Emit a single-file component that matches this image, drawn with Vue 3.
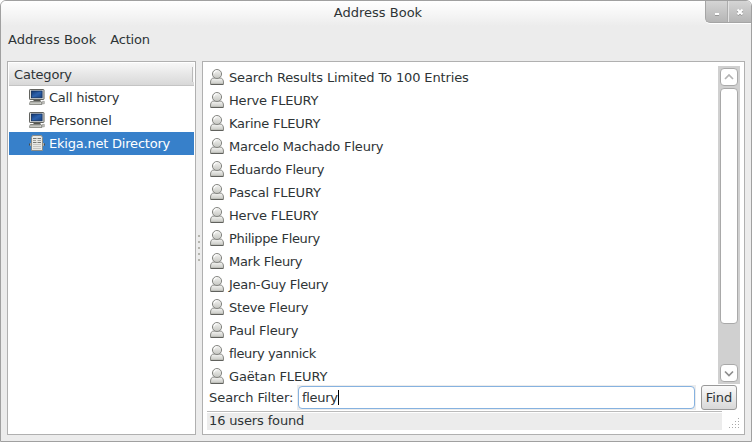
<script setup>
import { ref } from 'vue'

// tracking: letter spacing in px for each label
const categories = [
  { name: 'Call history', icon: 'computer', tracking: -0.25 },
  { name: 'Personnel', icon: 'computer', tracking: -0.08 },
  { name: 'Ekiga.net Directory', icon: 'server', tracking: -0.21 },
]
const selected = ref(2)
const contacts = [
  { name: 'Search Results Limited To 100 Entries', tracking: -0.13 },
  { name: 'Herve FLEURY', tracking: -0.18 },
  { name: 'Karine FLEURY', tracking: -0.22 },
  { name: 'Marcelo Machado Fleury', tracking: -0.18 },
  { name: 'Eduardo Fleury', tracking: -0.24 },
  { name: 'Pascal FLEURY', tracking: -0.12 },
  { name: 'Herve FLEURY', tracking: -0.18 },
  { name: 'Philippe Fleury', tracking: -0.34 },
  { name: 'Mark Fleury', tracking: -0.3 },
  { name: 'Jean-Guy Fleury', tracking: -0.3 },
  { name: 'Steve Fleury', tracking: -0.2 },
  { name: 'Paul Fleury', tracking: -0.22 },
  { name: 'fleury yannick', tracking: -0.37 },
  { name: 'Gaëtan FLEURY', tracking: -0.14 },
]
const filter = ref('fleury')
const gripDots = [
  [9, 0], [6, 3], [9, 3], [3, 6], [6, 6], [9, 6], [0, 9], [3, 9], [6, 9], [9, 9],
]
</script>

<template>
  <div class="window">
    <svg class="defs" width="0" height="0">
      <defs>
        <linearGradient id="body" x1="0" y1="0" x2="0" y2="1">
          <stop offset="0" stop-color="#f6f6f4" />
          <stop offset="1" stop-color="#c4c5c0" />
        </linearGradient>
        <linearGradient id="screen" x1="0" y1="0" x2="1" y2="1">
          <stop offset="0" stop-color="#12366f" />
          <stop offset="0.5" stop-color="#2d62ad" />
          <stop offset="1" stop-color="#17407e" />
        </linearGradient>
        <symbol id="person" viewBox="0 0 16 16">
          <path d="M1.5 14c0-3 .8-5 3.500-5h6c2.700 0 3.500 2 3.500 5q0 1.500-1 1.500h-11q-1 0-1-1.500z" fill="url(#body)" stroke="#858682" />
          <path d="M1.500 15.400h13" stroke="#5c5d59" />
          <ellipse cx="8" cy="5" rx="4.600" ry="4.500" fill="url(#body)" stroke="#858682" />
          <path d="M5 4.500a3 3 0 0 1 3.200-2.800" fill="none" stroke="#fff" />
        </symbol>
        <symbol id="computer" viewBox="0 0 16 16">
          <rect x="0.500" y="0.500" width="14.500" height="10" rx="0.600" fill="#deded9" stroke="#62635f" />
          <rect x="2.400" y="2" width="10.700" height="6.800" fill="url(#screen)" stroke="#102d5c" stroke-width="0.800" />
          <path d="M4.500 11h7v1.300h-7z" fill="#555651" />
          <path d="M1.300 12.500h10.800l.9 2.900H0.500z" fill="#deded9" stroke="#797a75" stroke-width="0.900" />
          <path d="M2 13.800h9.300" stroke="#a4a5a0" />
          <path d="M13.500 12.300h1.800v2.500h-1.800z" fill="#c5c6c1" stroke="#8b8c87" stroke-width="0.600" />
        </symbol>
        <symbol id="server" viewBox="0 0 16 16">
          <path d="M0 9.500h16" stroke="#4c4d4a" stroke-width="2" />
          <path d="M1.500 8v3M14.500 8v3" stroke="#a9aaa5" />
          <path d="M3.500 0.500h9l1 2v13h-11v-13z" fill="#e9e9e5" stroke="#8a8b86" />
          <path d="M4 3.500h3.500M8.500 3.500H12M4 7.500h3.500M8.500 7.500H12" stroke="#777873" />
          <path d="M4 5.500h3M8.500 5.500H12" stroke="#a0a19c" />
          <path d="M4.500 9.500h7M4.500 11.500h7M4.500 13.500h7" stroke="#a0a19c" stroke-dasharray="1 1" />
        </symbol>
      </defs>
    </svg>

    <header class="titlebar">
      <span class="title">Address Book</span>
      <div class="controls">
        <button class="control" aria-label="Minimize">
          <svg width="12" height="12"><path d="M4 8h4" stroke="#fff" stroke-width="2" /><path d="M4 9.500h4" stroke="#989898" /></svg>
        </button>
        <button class="control" aria-label="Close">
          <svg width="12" height="12"><path d="M3.500 4l5 5M8.500 4l-5 5" stroke="#8e8e8e" stroke-width="2.500" /><path d="M3.500 3.500l5 5M8.500 3.500l-5 5" stroke="#fff" stroke-width="2.200" /></svg>
        </button>
      </div>
    </header>

    <nav class="menubar">
      <span>Address Book</span>
      <span class="tight">Action</span>
    </nav>

    <main class="panes">
      <section class="panel sidebar">
        <div class="column-head tight">Category</div>
        <div
          v-for="(c, i) in categories"
          :key="c.name"
          class="category"
          :class="{ selected: i === selected }"
          @click="selected = i"
        >
          <svg width="16" height="16"><use :href="'#' + c.icon" /></svg>
          <span :style="{ letterSpacing: c.tracking + 'px' }">{{ c.name }}</span>
        </div>
      </section>

      <div class="handle"><i v-for="n in 5" :key="n" /></div>

      <section class="panel content">
        <div class="listing">
          <div class="contacts">
            <div v-for="(c, i) in contacts" :key="i" class="contact">
              <svg width="16" height="16"><use href="#person" /></svg>
              <span :style="{ letterSpacing: c.tracking + 'px' }">{{ c.name }}</span>
            </div>
          </div>
          <div class="scrollbar">
            <div class="step">
              <svg width="16" height="16"><path d="M4 10l4-4 4 4" fill="none" stroke="#b4b4b4" stroke-width="1.700" /></svg>
            </div>
            <div class="thumb" />
            <div class="spacer" />
            <div class="step">
              <svg width="16" height="16"><path d="M4 6.500l4 4 4-4" fill="none" stroke="#8e8e8e" stroke-width="1.700" /></svg>
            </div>
          </div>
        </div>

        <div class="search">
          <span class="label">Search Filter:</span>
          <div class="entry-wrap">
            <div class="entry">{{ filter }}<i class="caret" /></div>
          </div>
          <button class="find">Find</button>
        </div>

        <div class="status">
          <div class="status-text">16 users found</div>
          <svg class="grip" width="11" height="11">
            <rect v-for="(d, i) in gripDots" :key="i" :x="d[0]" :y="d[1]" width="1" height="1" fill="#a8a8a8" />
          </svg>
        </div>
      </section>
    </main>
  </div>
</template>

<style>
body {
  background: #fff;
}
</style>

<style scoped>
* {
  box-sizing: border-box;
}
.window {
  width: 752px;
  height: 442px;
  display: flex;
  flex-direction: column;
  overflow: hidden;
  border: 1px solid #a0a0a0;
  border-radius: 6px 6px 0 0;
  background: #ececec;
  color: #2e3436;
  font: 13px/23px "DejaVu Sans", sans-serif;
}
.defs {
  position: absolute;
}
svg {
  display: block;
  flex: none;
}
button {
  font: inherit;
  color: inherit;
  padding: 0;
  margin: 0;
}
.tight {
  letter-spacing: -0.2px;
}
.titlebar {
  flex: none;
  height: 25px;
  display: grid;
  grid-template-columns: 49px 1fr 49px;
  background: linear-gradient(#fff, #f4f4f4 60%, #ececec);
}
.title {
  grid-column: 2;
  padding-left: 4px;
  text-align: center;
}
.controls {
  display: flex;
  justify-self: end;
  width: 46px;
  height: 22px;
  border: solid #a5a5a5;
  border-width: 0 0 1px 1px;
  border-radius: 0 0 0 5px;
  overflow: hidden;
  background: linear-gradient(#d5d5d5, #b5b5b5);
  box-shadow: 0 1px 0 #fff;
}
.control {
  flex: 1;
  display: flex;
  align-items: center;
  justify-content: center;
  border: 0;
  background: none;
}
.control + .control {
  border-left: 1px solid #e2e2e2;
  box-shadow: -1px 0 0 #acacac;
}
.menubar {
  flex: none;
  height: 35px;
  display: flex;
  gap: 14px;
  padding: 2px 7px 0;
}
.panes {
  flex: none;
  height: 374px;
  display: flex;
  padding: 0 6px;
}
.panel {
  flex: none;
  border: 1px solid #b0b0b0;
  background: #fff;
}
.sidebar {
  width: 189px;
  padding: 1px;
}
.column-head {
  display: flex;
  justify-content: space-between;
  height: 23px;
  padding-left: 5px;
  border-bottom: 1px solid #c4c4c4;
  background: linear-gradient(#f7f7f7, #d8d8d8);
}
.column-head::after {
  content: "";
  width: 1px;
  height: 15px;
  margin-top: 4px;
  border-left: 1px solid #bababa;
  background: #f8f8f8;
}
.category {
  display: flex;
  align-items: center;
  gap: 4px;
  height: 23px;
  padding-left: 20px;
}
.category svg,
.contact svg {
  margin-bottom: 1px;
}
.selected {
  background: #3780ca;
  color: #fff;
}
.handle {
  width: 6px;
  display: flex;
  flex-direction: column;
  align-items: center;
  justify-content: center;
  gap: 4px;
}
.handle i {
  width: 2px;
  height: 2px;
  background: #b5b5ae;
}
.content {
  width: 543px;
  padding: 4px;
  display: flex;
  flex-direction: column;
}
.listing {
  flex: none;
  height: 318px;
  display: flex;
}
.contacts {
  flex: 1;
  overflow: hidden;
}
.contact {
  display: flex;
  align-items: center;
  gap: 4px;
  height: 23px;
  padding-left: 2px;
}
.scrollbar {
  width: 22px;
  display: flex;
  flex-direction: column;
  padding: 2px;
  background: #d0d0d0;
}
.step,
.thumb {
  flex: none;
  width: 18px;
  border: 1px solid #a9a9a9;
  border-radius: 4px;
  background: #fff;
}
.step {
  height: 18px;
}
.thumb {
  height: 236px;
  margin-top: 2px;
}
.spacer {
  flex: 1;
}
.search {
  flex: none;
  height: 27px;
  display: flex;
  padding: 1px 3px 1px 2px;
}
.label {
  width: 88px;
  padding-top: 1px;
  letter-spacing: -0.05px;
  white-space: nowrap;
}
.entry-wrap {
  width: 399px;
  height: 25px;
  padding: 1px;
  background: #ececec;
}
.entry {
  height: 23px;
  display: flex;
  align-items: center;
  padding-left: 3px;
  letter-spacing: -0.3px;
  border: 1px solid #86b2e0;
  border-radius: 4px;
  background: #fff;
}
.caret {
  width: 1px;
  height: 15px;
  background: #000;
}
.find {
  width: 36px;
  height: 25px;
  margin-left: auto;
  border: 1px solid #999;
  border-radius: 3px;
  background: linear-gradient(#fafafa, #d8d8d8);
}
.status {
  flex: none;
  display: flex;
  justify-content: space-between;
  height: 19px;
}
.status-text {
  width: 515px;
  height: 19px;
  padding-left: 2px;
  letter-spacing: -0.14px;
  border-top: 1px solid #bbb;
  box-shadow: inset 0 1px 0 #fff;
  background: #ececec;
  line-height: 18px;
}
.grip {
  margin: 7px 0 0;
}
</style>
